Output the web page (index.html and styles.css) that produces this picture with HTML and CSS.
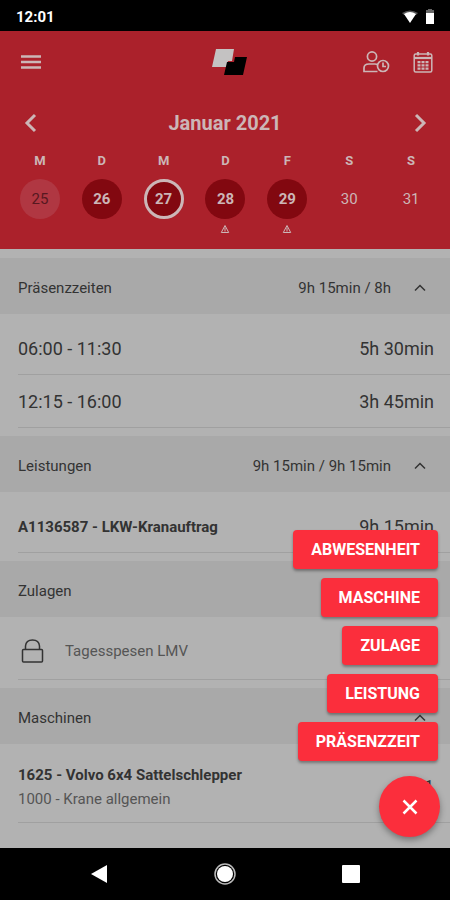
FILE: index.html
```html
<!DOCTYPE html>
<html lang="de">
<head>
<meta charset="utf-8">
<meta name="viewport" content="width=device-width, initial-scale=1">
<title>Januar 2021</title>
<link rel="stylesheet" href="styles.css">
</head>
<body>
<div class="status">
  <span>12:01</span>
  <div class="status-icons">
    <svg width="18" height="16" viewBox="0 0 18 16"><path d="M1 4Q9-1 17 4L15 6H3Z" fill="#555"/><path d="M3 5Q9 1 15 5L9 14Z" fill="#fff"/></svg>
    <svg width="10" height="16" viewBox="0 0 10 16"><path d="M3 0h4v1h2v3H1V1h2z" fill="#666"/><path d="M1 4h8v11H1z" fill="#fff"/></svg>
  </div>
</div>
<header class="header">
  <div class="toolbar">
    <button class="icon-btn" aria-label="Menü"><svg width="22" height="18" viewBox="0 0 22 18" stroke="currentColor" stroke-width="2.400"><path d="M1 3.500h20M1 9h20M1 14.500h20"/></svg></button>
    <svg class="logo" width="42" height="28" viewBox="-5 0 42 28"><path d="M5 1h18l-2 12h-4l-1 6H1z" fill="#c4c2c2"/><path d="M24 9h12l-4 18H13l3-13h7z" fill="#000"/></svg>
    <div class="tools">
      <button class="icon-btn" aria-label="Anwesenheit"><svg width="28" height="24" viewBox="0 0 28 24" fill="none" stroke="currentColor" stroke-width="1.700"><circle cx="10" cy="6.500" r="4.600"/><path d="M15.500 21.500H2v-3.500Q2 14 7 14h6q1.500 0 2.500.5"/><circle cx="21" cy="16" r="5.500"/><path d="M21 12.500v4h3"/></svg></button>
      <button class="icon-btn" aria-label="Kalender"><svg width="20" height="24" viewBox="0 0 20 24" fill="none" stroke="currentColor" stroke-width="1.500"><rect x="1.200" y="4" width="17.600" height="18" rx="1.500"/><path d="M1 8h18" stroke-width="2.200"/><path d="M5 2v3.500M15 2v3.500" stroke-width="2.200"/><path d="M4.500 12.200h11M4.500 15.400h11M4.500 18.600h11" stroke-width="2.200" stroke-dasharray="3 1"/></svg></button>
    </div>
  </div>
  <div class="month">
    <button class="icon-btn" aria-label="Zurück"><svg width="22" height="20" viewBox="0 0 22 20" fill="none" stroke="currentColor" stroke-width="3"><path d="m16 2-8 8 8 8"/></svg></button>
    <h1>Januar 2021</h1>
    <button class="icon-btn" aria-label="Weiter"><svg width="22" height="20" viewBox="0 0 22 20" fill="none" stroke="currentColor" stroke-width="3"><path d="m7 2 8 8-8 8"/></svg></button>
  </div>
  <div class="week">
    <div class="day"><span class="name">M</span><button class="date faded">25</button></div>
    <div class="day"><span class="name">D</span><button class="date full">26</button></div>
    <div class="day"><span class="name">M</span><button class="date full current">27</button></div>
    <div class="day"><span class="name">D</span><button class="date full">28</button><svg class="warn" width="10" height="10" viewBox="0 0 10 10"><path d="M5 1.500 8.700 8.500H1.300Z" fill="none" stroke="currentColor"/><path d="M5 3.500v4" stroke="currentColor"/></svg></div>
    <div class="day"><span class="name">F</span><button class="date full">29</button><svg class="warn" width="10" height="10" viewBox="0 0 10 10"><path d="M5 1.500 8.700 8.500H1.300Z" fill="none" stroke="currentColor"/><path d="M5 3.500v4" stroke="currentColor"/></svg></div>
    <div class="day"><span class="name">S</span><button class="date">30</button></div>
    <div class="day"><span class="name">S</span><button class="date">31</button></div>
  </div>
</header>
<main class="content">
  <section>
    <div class="bar"><h2>Präsenzzeiten</h2><span>9h 15min / 8h</span><button class="icon-btn toggle" aria-label="Einklappen"><svg width="12" height="8" viewBox="0 0 12 8" fill="none" stroke="currentColor" stroke-width="1.500"><path d="m1 6.500 5-5 5 5"/></svg></button></div>
    <ul class="list">
      <li><span>06:00 - 11:30</span><span>5h 30min</span></li>
      <li><span>12:15 - 16:00</span><span>3h 45min</span></li>
    </ul>
  </section>
  <section>
    <div class="bar"><h2>Leistungen</h2><span>9h 15min / 9h 15min</span><button class="icon-btn toggle" aria-label="Einklappen"><svg width="12" height="8" viewBox="0 0 12 8" fill="none" stroke="currentColor" stroke-width="1.500"><path d="m1 6.500 5-5 5 5"/></svg></button></div>
    <ul class="list">
      <li><strong>A1136587 - LKW-Kranauftrag</strong><span>9h 15min</span></li>
    </ul>
  </section>
  <section>
    <div class="bar"><h2>Zulagen</h2></div>
    <ul class="list">
      <li class="locked"><svg width="24" height="26" viewBox="0 0 24 26" fill="none" stroke="#333" stroke-width="1.500"><rect x="1.500" y="11.500" width="20" height="12.500" rx="1"/><path d="M4.500 11V8Q5 2 11.500 2T18.500 8v3"/></svg><span class="sub">Tagesspesen LMV</span></li>
    </ul>
  </section>
  <section>
    <div class="bar"><h2>Maschinen</h2><button class="icon-btn toggle" aria-label="Einklappen"><svg width="12" height="8" viewBox="0 0 12 8" fill="none" stroke="currentColor" stroke-width="1.500"><path d="m1 6.500 5-5 5 5"/></svg></button></div>
    <ul class="list">
      <li class="machine"><div class="stack"><strong>1625 - Volvo 6x4 Sattelschlepper</strong><span class="sub">1000 - Krane allgemein</span></div><span class="count">1</span></li>
    </ul>
  </section>
  <div class="actions">
    <button class="action">ABWESENHEIT</button>
    <button class="action">MASCHINE</button>
    <button class="action">ZULAGE</button>
    <button class="action">LEISTUNG</button>
    <button class="action">PRÄSENZZEIT</button>
    <button class="fab" aria-label="Schließen"><svg width="18" height="18" viewBox="0 0 18 18" stroke="#fff" stroke-width="2.500"><path d="m2.500 2.500 13 13M15.500 2.500l-13 13"/></svg></button>
  </div>
</main>
<nav class="nav">
  <button class="icon-btn" aria-label="Zurück"><svg width="22" height="22" viewBox="0 0 22 22"><path d="M19 2v18L3 11Z" fill="#fff"/></svg></button>
  <button class="icon-btn" aria-label="Start"><svg width="22" height="22" viewBox="0 0 22 22"><circle cx="11" cy="11" r="10" fill="none" stroke="#bbb" stroke-width="1.500"/><circle cx="11" cy="11" r="8" fill="#fff"/></svg></button>
  <button class="icon-btn" aria-label="Übersicht"><svg width="22" height="22" viewBox="0 0 22 22"><rect x="2" y="2" width="18" height="18" rx="1" fill="#fff"/></svg></button>
</nav>
</body>
</html>
```
FILE: styles.css
```css
* { box-sizing: border-box; }
body {
  margin: 0;
  min-height: 100vh;
  display: flex;
  flex-direction: column;
  background: #b2b2b2;
  color: #333;
  font: 15px/20px Roboto, sans-serif;
}
button { font: inherit; border: 0; margin: 0; padding: 0; cursor: pointer; }
h1, h2, ul { margin: 0; padding: 0; }
svg { display: block; }
.icon-btn { background: none; color: inherit; }

.status {
  display: flex;
  align-items: center;
  justify-content: space-between;
  height: 31px;
  padding: 2px 15px 0 16px;
  background: #000;
  color: #fff;
  font-size: 15px;
  font-weight: 700;
}
.status-icons { display: flex; gap: 6px; }

.header { height: 218px; background: #ab212b; color: #ccb6b7; }
.toolbar {
  display: grid;
  grid-template-columns: 1fr auto 1fr;
  align-items: center;
  height: 62px;
  padding: 0 17px 0 20px;
}
.tools { display: flex; justify-content: flex-end; gap: 23px; }
.month {
  display: flex;
  align-items: center;
  justify-content: space-between;
  height: 60px;
  padding: 0 19px;
}
.month h1 { font-size: 20px; line-height: 24px; font-weight: 700; }
.week {
  display: grid;
  grid-template-columns: repeat(7, 1fr);
  padding: 0 8px 0 9px;
}
.day { display: flex; flex-direction: column; align-items: center; }
.name { font-size: 13px; line-height: 16px; font-weight: 700; margin-bottom: 10px; }
.date {
  width: 40px;
  height: 40px;
  border-radius: 50%;
  background: none;
  color: inherit;
}
.faded { background: #b03742; color: #571820; }
.full { background: #820810; font-weight: 700; }
.current { border: 3px solid #ccb6b7; }
.warn { margin-top: 5px; }

.content { position: relative; flex: 1; padding-top: 9px; }
.bar { display: flex; align-items: center; height: 56px; padding: 4px 16px 0 18px; background: #a9a9a9; }
.bar h2 { flex: 1; font-size: 15px; font-weight: 400; }
.toggle { display: grid; place-items: center; width: 28px; height: 24px; margin-left: 15px; }
.list { list-style: none; padding: 8px 0 8px 18px; }
.list li {
  display: flex;
  align-items: center;
  justify-content: space-between;
  min-height: 53px;
  padding: 1px 16px 0 0;
  border-bottom: 1px solid #a0a0a0;
  font-size: 18px;
}
.list strong { font-size: 15px; font-weight: 700; }
.list .sub { font-size: 15px; color: #555; }
.list .locked { justify-content: flex-start; gap: 20px; min-height: 55px; padding: 0 0 2px 3px; }
.list .machine { min-height: 71px; padding-top: 0; }
.stack { display: flex; flex-direction: column; gap: 4px; }

.actions {
  position: absolute;
  right: 12px;
  bottom: 11px;
  display: flex;
  flex-direction: column;
  align-items: flex-end;
  gap: 9px;
}
.action {
  height: 39px;
  padding: 0 18px;
  border-radius: 4px;
  background: #fb2e3c;
  color: #fff;
  font-size: 16px;
  font-weight: 700;
  box-shadow: 0 2px 3px rgba(0, 0, 0, .35);
}
.fab {
  display: grid;
  place-items: center;
  width: 61px;
  height: 61px;
  margin: 6px -2px 0 0;
  border-radius: 50%;
  background: #fb2e3c;
  box-shadow: 0 3px 6px rgba(0, 0, 0, .35);
}

.nav {
  display: flex;
  align-items: center;
  justify-content: space-between;
  height: 52px;
  padding: 0 88px;
  background: #000;
}
```
